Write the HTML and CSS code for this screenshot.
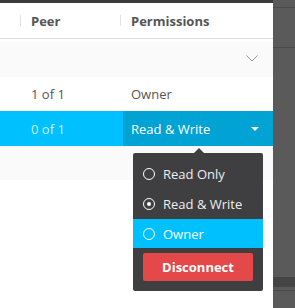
FILE: index.html
```html
<!DOCTYPE html>
<html lang="en">
<head>
<meta charset="UTF-8">
<meta name="viewport" content="width=device-width, initial-scale=1.0">
<title>Peers</title>
<link rel="stylesheet" href="styles.css">
</head>
<body>

<div class="main">
  <div class="topbar"></div>

  <div class="head">
    <div class="head-gap"></div>
    <div class="head-cell"><span class="sep"></span>Peer</div>
    <div class="head-cell"><span class="sep"></span>Permissions</div>
  </div>

  <div class="rows">
    <div class="row shaded">
      <div></div>
      <div></div>
      <div class="cell end">
        <svg width="12" height="7" viewBox="0 0 12 7"><path d="M0.5 0.5 L6 6 L11.5 0.5" fill="none" stroke="#9a9a9a" stroke-width="1"/></svg>
      </div>
    </div>
    <div class="row">
      <div></div>
      <div class="cell">1 of 1</div>
      <div class="cell">Owner</div>
    </div>
    <div class="row active">
      <div></div>
      <div class="cell faded">0 of 1</div>
      <div class="cell select">Read &amp; Write<span class="caret"></span></div>
    </div>
    <div class="row shaded short"></div>
  </div>

  <div class="popup">
    <div class="option"><span class="radio"></span>Read Only</div>
    <div class="option"><span class="radio checked"></span>Read &amp; Write</div>
    <div class="option hover"><span class="radio"></span>Owner</div>
    <button class="disconnect">Disconnect</button>
  </div>
</div>

<div class="side">
  <div class="side-top"></div>
  <div class="side-block"></div>
  <div class="side-fill"></div>
  <div class="side-band"></div>
  <div class="side-bottom"></div>
</div>

</body>
</html>
```

FILE: styles.css
```css
body {
  margin: 0;
  display: flex;
  height: 308px;
  font-family: "Open Sans", sans-serif;
  font-size: 13px;
  color: #555;
  background-color: #fff;
  overflow: hidden;
}

.main {
  width: 273px;
  position: relative;
  background-color: #fff;
}

.topbar {
  height: 3px;
  background-color: #3b3b3b;
}

.head {
  display: flex;
  height: 35px;
  border-bottom: 1px solid #dcdcdc;
  margin-bottom: 3px;
  font-weight: 700;
}

.head-gap {
  width: 20px;
}

.head-cell {
  width: 100px;
  display: flex;
  align-items: center;
}

.sep {
  width: 1px;
  height: 11px;
  background-color: #e2e2e2;
  margin-right: 10px;
}

.row {
  display: grid;
  grid-template-columns: 23px 100px 150px;
  height: 35px;
}

.row.short {
  height: 34px;
}

.row:nth-child(2) {
  height: 34px;
}

.shaded {
  background-color: #fafafa;
}

.cell {
  display: flex;
  align-items: center;
  padding-left: 8px;
}

.cell.end {
  justify-content: flex-end;
  padding-right: 15px;
  padding-bottom: 3px;
}

.active {
  background-color: #00c1fe;
  color: #fff;
}

.faded {
  color: #c9effd;
}

.select {
  background-color: #00a3d3;
  justify-content: space-between;
  padding-right: 14px;
}

.caret {
  width: 0;
  height: 0;
  border-left: 4px solid transparent;
  border-right: 4px solid transparent;
  border-top: 4px solid #fff;
}

/* dropdown under the selected permission */
.popup {
  position: absolute;
  left: 133px;
  top: 153px;
  width: 130px;
  padding: 6px 0 10px;
  background-color: #3f3f41;
  border-radius: 2px;
  color: #eee;
}

.popup::before {
  content: "";
  position: absolute;
  top: -5px;
  left: 61px;
  border-left: 5px solid transparent;
  border-right: 5px solid transparent;
  border-bottom: 5px solid #3f3f41;
}

.option {
  display: flex;
  align-items: center;
  height: 30px;
  padding-left: 10px;
}

.option.hover {
  background-color: #00c1fe;
  color: #fff;
  height: 29px;
}

.radio {
  width: 10px;
  height: 10px;
  border: 1.5px solid #fff;
  border-radius: 50%;
  margin-right: 8px;
  display: flex;
  align-items: center;
  justify-content: center;
}

.checked::after {
  content: "";
  width: 4px;
  height: 4px;
  border-radius: 50%;
  background-color: #fff;
}

.disconnect {
  display: block;
  width: 110px;
  height: 28px;
  margin: 5px 10px 0;
  border: none;
  border-radius: 2px;
  background-color: #e44848;
  color: #fff;
  font-family: "Open Sans", sans-serif;
  font-size: 13px;
  font-weight: 700;
}

.side {
  flex: 1;
  display: flex;
  flex-direction: column;
  background-color: #5a5a5a;
}

.side-top {
  height: 7px;
  border-bottom: 1px solid #4b4b4b;
}

.side-block {
  height: 39px;
  border-bottom: 1px solid #4b4b4b;
}

.side-fill {
  height: 229px;
}

.side-band {
  height: 10px;
  background-color: #454545;
}

.side-bottom {
  flex: 1;
  border-top: 1px solid #4b4b4b;
  margin-top: 3px;
}
```
